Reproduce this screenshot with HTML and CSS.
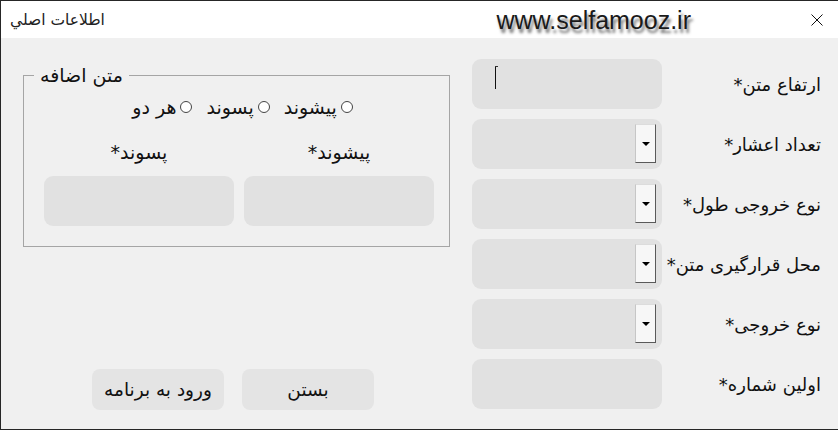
FILE: index.html
```html
<!DOCTYPE html>
<html lang="fa">
<head>
<meta charset="utf-8">
<title>اطلاعات اصلي</title>
<link rel="stylesheet" href="styles.css">
</head>
<body>
<div class="window">
  <div class="titlebar">
    <span class="title">اطلاعات اصلي</span>
    <span class="watermark">www.selfamooz.ir</span>
    <span class="close">
      <svg width="12" height="12" viewBox="0 0 12 12"><path d="M0.5 0.5 L11.5 11.5 M11.5 0.5 L0.5 11.5" stroke="#111" stroke-width="1" fill="none"/></svg>
    </span>
  </div>
  <div class="content" dir="rtl">
    <div class="form">
      <div class="row"><span class="label">ارتفاع متن*</span><div class="box"><span class="caret"></span></div></div>
      <div class="row"><span class="label">تعداد اعشار*</span><div class="box combo"><span class="drop"><span class="arrow"></span></span></div></div>
      <div class="row"><span class="label">نوع خروجی طول*</span><div class="box combo"><span class="drop"><span class="arrow"></span></span></div></div>
      <div class="row"><span class="label">محل قرارگیری متن*</span><div class="box combo"><span class="drop"><span class="arrow"></span></span></div></div>
      <div class="row"><span class="label">نوع خروجی*</span><div class="box combo"><span class="drop"><span class="arrow"></span></span></div></div>
      <div class="row"><span class="label">اولین شماره*</span><div class="box"></div></div>
    </div>
    <div class="panel">
      <fieldset class="group">
        <legend class="legend">متن اضافه</legend>
        <div class="group-body" dir="rtl">
          <div class="radios">
            <span class="radio"><span class="dot"></span>پیشوند</span>
            <span class="radio"><span class="dot"></span>پسوند</span>
            <span class="radio"><span class="dot"></span>هر دو</span>
          </div>
          <div class="pair">
            <div class="field"><span class="flabel">پیشوند*</span><div class="box"></div></div>
            <div class="field"><span class="flabel">پسوند*</span><div class="box"></div></div>
          </div>
        </div>
      </fieldset>
      <div class="buttons">
        <span class="btn">بستن</span>
        <span class="btn">ورود به برنامه</span>
      </div>
    </div>
  </div>
</div>
</body>
</html>
```

FILE: styles.css
```css
html, body {
  margin: 0;
  padding: 0;
}
body {
  width: 838px;
  height: 430px;
  overflow: hidden;
  font-family: "DejaVu Sans", "Noto Sans", sans-serif;
  color: #111;
}
.window {
  box-sizing: border-box;
  width: 838px;
  height: 430px;
  border-top: 1px solid #262626;
  border-left: 1px solid #262626;
  border-bottom: 1px solid #262626;
  display: flex;
  flex-direction: column;
  background: #f0f0f0;
}
.titlebar {
  height: 37px;
  flex: none;
  background: #ffffff;
  display: flex;
  align-items: center;
  direction: ltr;
  padding: 0 15px 0 9px;
}
.title {
  font-size: 15.5px;
  color: #222;
  direction: rtl;
}
.watermark {
  margin-left: auto;
  margin-right: 120px;
  font-family: "Liberation Sans", Arial, sans-serif;
  font-size: 25px;
  color: #1a1a1a;
  text-shadow: 2px 4px 3px rgba(0,0,0,0.55);
  position: relative;
  top: 1px;
}
.close {
  display: flex;
  width: 12px;
  height: 12px;
}
.content {
  flex: 1;
  display: flex;
  padding: 21px 17px 19px 21px;
  gap: 22px;
}
.form {
  width: 349px;
  display: flex;
  flex-direction: column;
  gap: 10px;
  flex: none;
}
.row {
  display: flex;
  align-items: center;
  height: 50px;
}
.label {
  width: 159px;
  flex: none;
  font-size: 18px;
  text-align: right;
  white-space: nowrap;
}
.box {
  box-sizing: border-box;
  width: 190px;
  height: 50px;
  border-radius: 9px;
  background: #e1e1e1;
  flex: none;
}
.row .box {
  display: flex;
  direction: ltr;
  align-items: flex-start;
}
.caret {
  display: block;
  width: 1px;
  height: 23px;
  margin: 7px 0 0 23px;
  background: #111;
  position: relative;
}
.caret::after {
  content: "";
  position: absolute;
  top: 0;
  left: 0;
  width: 3px;
  height: 1px;
  background: #333;
}
.combo {
  justify-content: flex-end;
  padding: 5px 6px 0 0;
}
.drop {
  box-sizing: border-box;
  width: 21px;
  height: 39px;
  background: #f7f7f7;
  border-top: 1px solid #dcdcdc;
  border-left: 1px solid #c6c6c6;
  border-right: 1px solid #5a5a5a;
  border-bottom: 1px solid #5a5a5a;
  display: flex;
  align-items: center;
  justify-content: center;
}
.arrow {
  width: 0;
  height: 0;
  border-left: 4px solid transparent;
  border-right: 4px solid transparent;
  border-top: 4px solid #000;
}
.panel {
  width: 427px;
  flex: none;
  display: flex;
  flex-direction: column;
}
.group {
  direction: ltr;
  margin: 4px 0 0 0;
  padding: 0 15px 20px 21px;
  border: 1px solid #a5a5a5;
  min-width: 0;
}
.legend {
  direction: rtl;
  font-size: 19px;
  line-height: 24px;
  padding: 0 6px;
  margin-left: -11px;
}
.group-body {
  display: flex;
  flex-direction: column;
}
.radios {
  display: flex;
  justify-content: center;
  gap: 14px;
  font-size: 19px;
  line-height: 24px;
  margin-top: 8px;
  padding-left: 6px;
}
.radio {
  display: flex;
  align-items: center;
  gap: 4px;
}
.dot {
  box-sizing: border-box;
  width: 12px;
  height: 12px;
  border-radius: 50%;
  border: 1.5px solid #444;
  background: #fff;
}
.pair {
  display: flex;
  gap: 10px;
  margin-top: 20px;
}
.field {
  display: flex;
  flex-direction: column;
  align-items: center;
  gap: 11px;
}
.flabel {
  font-size: 19px;
  line-height: 26px;
}
.buttons {
  margin-top: auto;
  display: flex;
  gap: 18px;
  padding-right: 76px;
}
.btn {
  box-sizing: border-box;
  width: 132px;
  height: 41px;
  border-radius: 8px;
  background: #e4e4e4;
  display: flex;
  align-items: center;
  justify-content: center;
  font-size: 18.5px;
}
```
